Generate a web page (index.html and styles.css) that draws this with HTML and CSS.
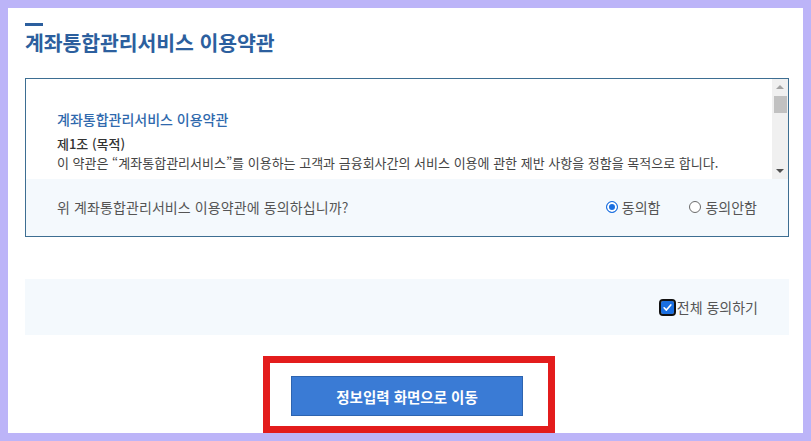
FILE: index.html
```html
<!DOCTYPE html>
<html lang="ko">
<head>
<meta charset="utf-8">
<title>계좌통합관리서비스 이용약관</title>
<link rel="stylesheet" href="styles.css">
</head>
<body>
<div class="page">
  <div class="title-bar"></div>
  <h1 class="title">계좌통합관리서비스 이용약관</h1>

  <div class="terms-box">
    <div class="terms-scroll">
      <div class="terms-content">
        <h2 class="terms-heading">계좌통합관리서비스 이용약관</h2>
        <p class="terms-article">제1조 (목적)</p>
        <p class="terms-text">이 약관은 “계좌통합관리서비스”를 이용하는 고객과 금융회사간의 서비스 이용에 관한 제반 사항을 정함을 목적으로 합니다.</p>
      </div>
      <div class="scrollbar">
        <span class="arrow-up"></span>
        <span class="thumb"></span>
        <span class="track-fill"></span>
        <span class="arrow-down"></span>
      </div>
    </div>
    <div class="agree-row">
      <span class="agree-question">위 계좌통합관리서비스 이용약관에 동의하십니까?</span>
      <div class="radio-group">
        <label class="radio"><span class="radio-dot checked"></span>동의함</label>
        <label class="radio"><span class="radio-dot"></span>동의안함</label>
      </div>
    </div>
  </div>

  <div class="agree-all">
    <label class="check-label">
      <span class="checkbox">
        <svg viewBox="0 0 12 12" width="11" height="11"><path d="M2.3 6.3 L4.8 8.8 L9.6 3.2" fill="none" stroke="#fff" stroke-width="1.8" stroke-linecap="round" stroke-linejoin="round"/></svg>
      </span>전체 동의하기
    </label>
  </div>

  <div class="btn-area">
    <button class="btn-primary" type="button">정보입력 화면으로 이동</button>
  </div>

  <div class="highlight"></div>
</div>
</body>
</html>
```

FILE: styles.css
```css
* {
  box-sizing: border-box;
}

html, body {
  margin: 0;
  padding: 0;
}

body {
  background: #bcb4f8;
  padding: 8px;
  height: 441px;
  font-family: "Noto Sans CJK KR", "Noto Sans", sans-serif;
  color: #444;
}

.page {
  position: relative;
  background: #fff;
  height: 425px;
  padding: 15px 14px 0 17px;
  display: flex;
  flex-direction: column;
}

.title-bar {
  width: 18px;
  height: 3px;
  background: #2c5f9e;
}

.title {
  margin: 1px 0 20px;
  font-size: 20.5px;
  line-height: 31px;
  font-weight: 700;
  color: #2c5f9e;
  letter-spacing: -0.1px;
}

.terms-box {
  border: 1px solid #3d6e92;
  display: flex;
  flex-direction: column;
}

.terms-scroll {
  display: flex;
  height: 100px;
  background: #fff;
}

.terms-content {
  flex: 1;
  padding: 30px 0 0 31px;
  overflow: hidden;
}

.terms-heading {
  margin: 0 0 5px;
  font-size: 14px;
  line-height: 20px;
  font-weight: 500;
  color: #2f69ad;
}

.terms-article {
  margin: 0;
  font-size: 13px;
  line-height: 19px;
  font-weight: 500;
  color: #333;
}

.terms-text {
  margin: 0;
  font-size: 13px;
  line-height: 19px;
  color: #444;
  white-space: nowrap;
}

.scrollbar {
  width: 16px;
  background: #f0f0f0;
  display: flex;
  flex-direction: column;
  align-items: center;
  padding: 4px 0 6px;
}

.arrow-up {
  width: 0;
  height: 0;
  border-left: 4px solid transparent;
  border-right: 4px solid transparent;
  border-bottom: 4px solid #a3a3a3;
  margin-top: 2px;
}

.thumb {
  width: 13px;
  height: 17px;
  background: #c1c1c1;
  margin-top: 7px;
}

.track-fill {
  flex: 1;
}

.arrow-down {
  width: 0;
  height: 0;
  border-left: 4px solid transparent;
  border-right: 4px solid transparent;
  border-top: 4px solid #505050;
}

.agree-row {
  height: 57px;
  background: #f4f9fd;
  display: flex;
  align-items: center;
  justify-content: space-between;
  padding: 0 31px 1px 31px;
}

.agree-question {
  font-size: 14px;
  color: #555;
  letter-spacing: 0.1px;
}

.radio-group {
  display: flex;
  gap: 29px;
}

.radio {
  display: flex;
  align-items: center;
  gap: 4px;
  font-size: 14px;
  color: #555;
}

.radio-dot {
  width: 12px;
  height: 12px;
  border-radius: 50%;
  border: 1px solid #6b6b6b;
  background: #fff;
}

.radio-dot.checked {
  border-color: #1a6fe0;
  background: #1a6fe0;
  box-shadow: inset 0 0 0 2px #fff;
}

.agree-all {
  margin-top: 42px;
  height: 56px;
  background: #f4f9fd;
  display: flex;
  align-items: center;
  justify-content: flex-end;
  padding: 0 31px 0 0;
}

.check-label {
  display: flex;
  align-items: center;
  gap: 3px;
  font-size: 14px;
  color: #555;
}

.checkbox {
  width: 13px;
  height: 13px;
  border-radius: 2px;
  background: #1a6fe0;
  outline: 2px solid #111;
  outline-offset: 0;
  display: flex;
  align-items: center;
  justify-content: center;
}

.btn-area {
  display: flex;
  justify-content: center;
  margin-top: 41px;
}

.btn-primary {
  width: 232px;
  height: 40px;
  background: #3a7bd5;
  border: 1px solid #2d64b0;
  color: #fff;
  font-family: "Noto Sans CJK KR", "Noto Sans", sans-serif;
  font-size: 14.5px;
  font-weight: 700;
  padding: 0;
}

.highlight {
  position: absolute;
  left: 255px;
  top: 348px;
  width: 292px;
  height: 77px;
  border: 7px solid #e31c1c;
  pointer-events: none;
}
```
